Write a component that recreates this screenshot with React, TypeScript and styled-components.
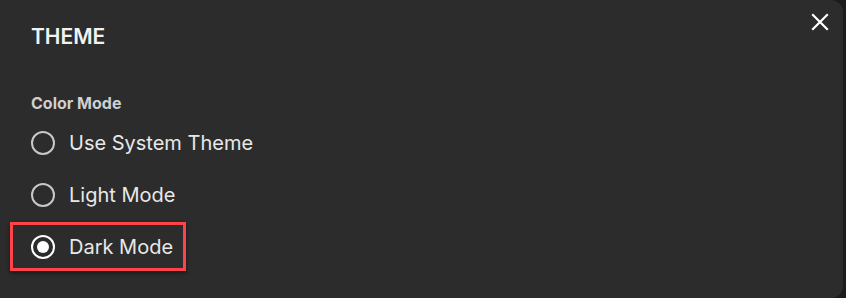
import React, { useState } from "react";
import styled, { createGlobalStyle } from "styled-components";

const Global = createGlobalStyle`
  html, body { margin: 0; padding: 0; background: #1c1c1c; }
  body { font-family: Inter, "Noto Sans", sans-serif; }
`;

const Panel = styled.div`
  width: 843px;
  height: 298px;
  box-sizing: border-box;
  background: #2c2c2c;
  border-radius: 0 12px 12px 0;
  padding: 25px 0 0 31px;
  position: relative;
  color: #ececec;
`;

const Title = styled.h2`
  margin: 0;
  font-size: 21px;
  font-weight: 600;
  line-height: 24px;
  color: #f2f2f2;
`;

const Close = styled.button`
  position: absolute;
  top: 12px;
  right: 13px;
  width: 20px;
  height: 20px;
  padding: 0;
  border: none;
  background: transparent;
  cursor: pointer;
  display: flex;
  align-items: center;
  justify-content: center;
`;

const SectionLabel = styled.div`
  margin-top: 45px;
  font-size: 16px;
  font-weight: 700;
  line-height: 18px;
  color: #cfcfcf;
`;

const Options = styled.div`
  display: flex;
  flex-direction: column;
  gap: 3px;
  margin-top: 6px;
  margin-left: -21px;
`;

const Option = styled.label<{ $highlight?: boolean }>`
  display: flex;
  align-items: center;
  gap: 14px;
  height: 49px;
  width: fit-content;
  padding: 0 10px 0 18px;
  box-sizing: border-box;
  border: 3px solid ${(p) => (p.$highlight ? "#ff4348" : "transparent")};
  box-shadow: ${(p) => (p.$highlight ? "0 2px 4px rgba(0,0,0,0.5)" : "none")};
  cursor: pointer;
`;

const Radio = styled.span<{ $checked?: boolean }>`
  width: 24px;
  height: 24px;
  box-sizing: border-box;
  border-radius: 50%;
  border: 2px solid ${(p) => (p.$checked ? "#ffffff" : "#c8c8c8")};
  display: flex;
  align-items: center;
  justify-content: center;
  &::after {
    content: "";
    width: 12px;
    height: 12px;
    border-radius: 50%;
    background: #ffffff;
    display: ${(p) => (p.$checked ? "block" : "none")};
  }
`;

const OptionText = styled.span`
  font-size: 20px;
  font-weight: 400;
  color: #e8e8e8;
  line-height: 24px;
`;

const options = ["Use System Theme", "Light Mode", "Dark Mode"];

export default function App() {
  const [sel, setSel] = useState(2);
  return (
    <>
      <Global />
      <Panel>
        <Title>THEME</Title>
        <Close aria-label="Close">
          <svg width="18" height="18" viewBox="0 0 18 18">
            <path d="M2 2 L16 16 M16 2 L2 16" stroke="#ffffff" strokeWidth="2.2" strokeLinecap="square" />
          </svg>
        </Close>
        <SectionLabel>Color Mode</SectionLabel>
        <Options>
          {options.map((o, i) => (
            <Option key={o} $highlight={i === 2} onClick={() => setSel(i)}>
              <Radio $checked={sel === i} />
              <OptionText>{o}</OptionText>
            </Option>
          ))}
        </Options>
      </Panel>
    </>
  );
}
